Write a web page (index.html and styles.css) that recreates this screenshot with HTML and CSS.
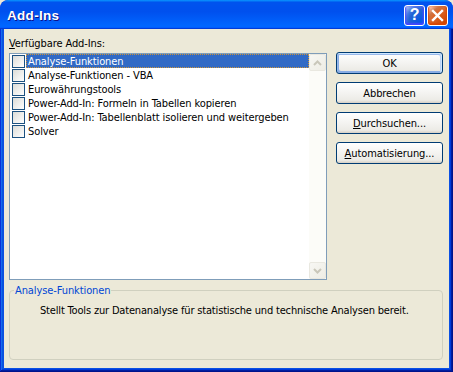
FILE: index.html
```html
<!DOCTYPE html>
<html lang="de">
<head>
<meta charset="utf-8">
<title>Add-Ins</title>
<link rel="stylesheet" href="styles.css">
</head>
<body>
<div class="window">
  <div class="titlebar">
    <span class="title">Add-Ins</span>
    <div class="tb-buttons">
      <span class="tb-btn help">?</span>
      <span class="tb-btn close"><svg width="13" height="13" viewBox="0 0 13 13"><path d="M2 2 L11 11 M11 2 L2 11" stroke="#fff" stroke-width="2.4" stroke-linecap="square"/></svg></span>
    </div>
  </div>
  <div class="frame">
    <div class="body">
      <div class="top">
        <div class="left">
          <div class="label"><u>V</u>erfügbare Add-Ins:</div>
          <div class="listbox">
            <div class="items">
              <div class="row selected"><span class="cb"></span><span class="txt">Analyse-Funktionen</span></div>
              <div class="row"><span class="cb"></span><span class="txt">Analyse-Funktionen - VBA</span></div>
              <div class="row"><span class="cb"></span><span class="txt">Eurowährungstools</span></div>
              <div class="row"><span class="cb"></span><span class="txt">Power-Add-In: Formeln in Tabellen kopieren</span></div>
              <div class="row"><span class="cb"></span><span class="txt">Power-Add-In: Tabellenblatt isolieren und weitergeben</span></div>
              <div class="row"><span class="cb"></span><span class="txt">Solver</span></div>
            </div>
            <div class="scrollbar">
              <div class="sb-btn"><svg width="9" height="6" viewBox="0 0 9 6"><path d="M1 5 L4.5 1.5 L8 5" fill="none" stroke="#c9c7ba" stroke-width="2"/></svg></div>
              <div class="track"></div>
              <div class="sb-btn"><svg width="9" height="6" viewBox="0 0 9 6"><path d="M1 1 L4.5 4.5 L8 1" fill="none" stroke="#c9c7ba" stroke-width="2"/></svg></div>
            </div>
          </div>
        </div>
        <div class="buttons">
          <button class="btn default">OK</button>
          <button class="btn">Abbrechen</button>
          <button class="btn"><u>D</u>urchsuchen...</button>
          <button class="btn"><u>A</u>utomatisierung...</button>
        </div>
      </div>
      <fieldset class="group">
        <legend>Analyse-Funktionen</legend>
        <p class="desc">Stellt Tools zur Datenanalyse für statistische und technische Analysen bereit.</p>
      </fieldset>
    </div>
  </div>
</div>
</body>
</html>
```
FILE: styles.css
```css
html, body {
  margin: 0;
  padding: 0;
  background: #ece9d8;
}

.window {
  width: 453px;
  height: 372px;
  display: flex;
  flex-direction: column;
  font-family: "DejaVu Sans Condensed", "DejaVu Sans", "Liberation Sans", sans-serif;
  font-stretch: condensed;
  font-size: 11px;
  letter-spacing: -0.1px;
  color: #000;
  background: #0831d9;
  border-radius: 8px 8px 0 0;
  overflow: hidden;
}

.titlebar {
  height: 29px;
  box-sizing: border-box;
  padding: 1px 5px 0 7px;
  display: flex;
  align-items: center;
  justify-content: space-between;
  background: linear-gradient(180deg, #0997ff, #0053ee 8%, #0050ee 40%, #0066ff 88%, #0066ff 93%, #005bff 95%, #003dd7 96%, #003dd7);
  border-radius: 8px 8px 0 0;
}

.title {
  font-family: "Liberation Sans", Arial, sans-serif;
  font-stretch: normal;
  font-weight: bold;
  font-size: 13.5px;
  color: #fff;
  text-shadow: 1px 1px #0f1089;
  letter-spacing: 0.3px;
}

.tb-buttons {
  display: flex;
  gap: 2px;
}

.tb-btn {
  width: 21px;
  height: 21px;
  box-sizing: border-box;
  border: 1px solid #fff;
  border-radius: 3px;
  display: flex;
  align-items: center;
  justify-content: center;
  color: #fff;
}

.help {
  background: radial-gradient(circle at 90% 90%, #0054e9 0, #2263d5 55%, #4479e4 70%, #a3bbec 90%, #fff 100%);
  box-shadow: inset 0 -1px 2px 1px #4646ff;
  font-family: "Liberation Sans", Arial, sans-serif;
  font-stretch: normal;
  font-weight: bold;
  font-size: 16px;
}

.close {
  background: radial-gradient(circle at 90% 90%, #cc4600 0, #dc6527 55%, #cd7546 70%, #ffccb2 90%, #fff 100%);
  box-shadow: inset 0 -1px 2px 1px #da4600;
}

.frame {
  flex: 1;
  display: flex;
  padding: 0 4px 4px;
  background: #0b50e3;
  box-shadow: inset -1px -1px #00138c, inset 1px 0 #0831d9, inset -2px -2px #001ea0, inset 2px 0 #166aee, inset -3px -3px #003bda, inset 3px 0 #0855dd;
}

.body {
  flex: 1;
  display: flex;
  flex-direction: column;
  background: #ece9d8;
  padding: 8px 6px 8px 5px;
}

.top {
  display: flex;
  gap: 9px;
}

.left {
  display: flex;
  flex-direction: column;
}

.label {
  height: 13px;
  line-height: 13px;
  margin-bottom: 3px;
}

.listbox {
  width: 318px;
  height: 227px;
  box-sizing: border-box;
  border: 1px solid #7f9db9;
  background: #fff;
  display: flex;
}

.items {
  flex: 1;
  padding-left: 2px;
}

.row {
  height: 14px;
  display: flex;
  align-items: center;
}

.cb {
  width: 13px;
  height: 13px;
  box-sizing: border-box;
  border: 1px solid #1c5180;
  background: linear-gradient(135deg, #dcdcd7, #fff);
  margin-right: 1px;
  flex: none;
}

.txt {
  flex: 1;
  height: 14px;
  box-sizing: border-box;
  white-space: nowrap;
  border: 1px solid transparent;
  display: flex;
  align-items: center;
  padding-left: 1px;
}

.selected .txt {
  background: #316ac5;
  color: #fff;
  border: 1px dotted #ce953a;
}

.scrollbar {
  width: 17px;
  display: flex;
  flex-direction: column;
  background: #fcfcf8;
}

.sb-btn {
  height: 17px;
  box-sizing: border-box;
  border: 1px solid #e9e8e0;
  border-radius: 2px;
  background: linear-gradient(135deg, #f7f7f3, #eeede5);
  display: flex;
  align-items: center;
  justify-content: center;
}

.track {
  flex: 1;
}

.buttons {
  display: flex;
  flex-direction: column;
  gap: 8px;
  margin-top: 15px;
}

.btn {
  width: 107px;
  height: 22px;
  box-sizing: border-box;
  font: inherit;
  letter-spacing: inherit;
  color: #000;
  border: 1px solid #003c74;
  border-radius: 3px;
  background: linear-gradient(180deg, #fff, #ecebe6 86%, #d6d0c5);
  padding: 0;
}

.btn.default {
  box-shadow: inset -1px 1px #cee7ff, inset 1px 2px #98b8ea, inset -2px 2px #bcd4f6, inset 1px -1px #89ade4, inset 2px -2px #89ade4;
}

.group {
  flex: 1;
  margin: 4px 0 0 0;
  padding: 0 0 0 4px;
  border: 1px solid #d0d0bf;
  border-radius: 4px;
  min-width: 0;
}

.group legend {
  color: #0046d5;
  padding: 0 1px;
  line-height: 13px;
}

.desc {
  margin: 7px 0 0;
  padding-left: 26px;
  line-height: 13px;
  letter-spacing: -0.17px;
}
```
